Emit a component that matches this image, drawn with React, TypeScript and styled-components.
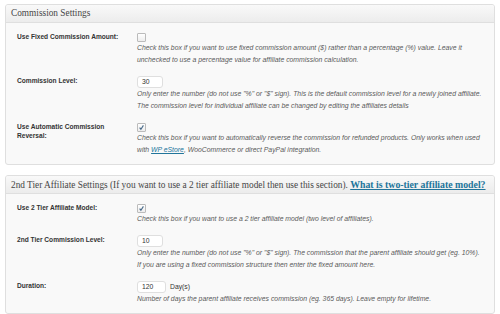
import React from "react";
import styled, { createGlobalStyle } from "styled-components";

const GlobalStyle = createGlobalStyle`
  html, body {
    margin: 0;
    padding: 0;
    background: #ffffff;
  }
  body {
    font-family: "Liberation Sans", Arial, sans-serif;
  }
`;

const Page = styled.div`
  width: 500px;
  height: 314px;
  padding: 4px 5px 0;
  box-sizing: border-box;
  display: flex;
  flex-direction: column;
  gap: 10px;
  overflow: hidden;
`;

const Panel = styled.section`
  border: 1px solid #dfdfdf;
  border-radius: 3px;
  background: #f9f9f9;
  overflow: hidden;
`;

const PanelHeader = styled.h3`
  margin: 0;
  height: 17px;
  line-height: 17px;
  padding: 0 0 0 5px;
  border-bottom: 1px solid #dfdfdf;
  background: linear-gradient(to bottom, #f9f9f9, #ececec);
  font-family: "Liberation Serif", "Times New Roman", serif;
  font-weight: normal;
  font-size: 9.3px;
  color: #464646;
  white-space: nowrap;
`;

const HeaderLink = styled.a`
  font-weight: bold;
  font-size: 9.8px;
  color: #21759b;
  text-decoration: underline;
`;

const PanelBody = styled.div`
  padding: 4px 0 6px;
`;

const Row = styled.div`
  display: grid;
  grid-template-columns: 112px 1fr;
  column-gap: 8px;
  padding: 5px 0 5px 11px;
`;

const Label = styled.div`
  font-weight: bold;
  font-size: 6.6px;
  line-height: 9px;
  color: #333333;
`;

const Field = styled.div`
  display: flex;
  flex-direction: column;
  align-items: flex-start;
`;

const Inline = styled.div`
  display: flex;
  align-items: center;
  gap: 4px;
  font-size: 6.8px;
  color: #333333;
`;

const Box = styled.span`
  display: block;
  width: 7px;
  height: 7px;
  margin-top: 1px;
  border: 1px solid #bbbbbb;
  border-radius: 1px;
  background: linear-gradient(to bottom, #ffffff, #ededed);
  position: relative;
`;

const Input = styled.div<{ $w: number }>`
  width: ${(p) => p.$w}px;
  height: 12px;
  box-sizing: border-box;
  border: 1px solid #dfdfdf;
  border-radius: 3px;
  background: #ffffff;
  font-size: 6.8px;
  line-height: 10px;
  padding-left: 4px;
  color: #333333;
`;

const Desc = styled.p`
  margin: 0;
  font-style: italic;
  font-size: 6.85px;
  line-height: 12px;
  color: #5a5a5a;
  white-space: nowrap;
`;

const DescLink = styled.a`
  color: #21759b;
  text-decoration: underline;
`;

function Checkbox({ checked }: { checked?: boolean }) {
  return (
    <Box>
      {checked && (
        <svg width="7" height="7" viewBox="0 0 7 7" style={{ position: "absolute", left: 0, top: 0 }}>
          <path d="M1.6 3.6 L2.9 5.2 L5.4 1.4" fill="none" stroke="#4a6b8a" strokeWidth="1.1" />
        </svg>
      )}
    </Box>
  );
}

export default function App() {
  return (
    <>
      <GlobalStyle />
      <Page>
        <Panel>
          <PanelHeader>Commission Settings</PanelHeader>
          <PanelBody>
            <Row>
              <Label>Use Fixed Commission Amount:</Label>
              <Field>
                <Checkbox />
                <Desc>
                  Check this box if you want to use fixed commission amount ($) rather than a percentage (%) value. Leave it
                  <br />
                  unchecked to use a percentage value for affiliate commission calculation.
                </Desc>
              </Field>
            </Row>
            <Row>
              <Label>Commission Level:</Label>
              <Field>
                <Input $w={26}>30</Input>
                <Desc>
                  Only enter the number (do not use "%" or "$" sign). This is the default commission level for a newly joined affiliate.
                  <br />
                  The commission level for individual affiliate can be changed by editing the affiliates details
                </Desc>
              </Field>
            </Row>
            <Row>
              <Label>
                Use Automatic Commission
                <br />
                Reversal:
              </Label>
              <Field>
                <Checkbox checked />
                <Desc>
                  Check this box if you want to automatically reverse the commission for refunded products. Only works when used
                  <br />
                  with <DescLink href="#">WP eStore</DescLink>, WooCommerce or direct PayPal integration.
                </Desc>
              </Field>
            </Row>
          </PanelBody>
        </Panel>

        <Panel>
          <PanelHeader>
            2nd Tier Affiliate Settings (If you want to use a 2 tier affiliate model then use this section).{" "}
            <HeaderLink href="#">What is two-tier affiliate model?</HeaderLink>
          </PanelHeader>
          <PanelBody>
            <Row>
              <Label>Use 2 Tier Affiliate Model:</Label>
              <Field>
                <Checkbox checked />
                <Desc>Check this box if you want to use a 2 tier affiliate model (two level of affiliates).</Desc>
              </Field>
            </Row>
            <Row>
              <Label>2nd Tier Commission Level:</Label>
              <Field>
                <Input $w={26}>10</Input>
                <Desc>
                  Only enter the number (do not use "%" or "$" sign). The commission that the parent affiliate should get (eg. 10%).
                  <br />
                  If you are using a fixed commission structure then enter the fixed amount here.
                </Desc>
              </Field>
            </Row>
            <Row>
              <Label>Duration:</Label>
              <Field>
                <Inline>
                  <Input $w={29}>120</Input>
                  Day(s)
                </Inline>
                <Desc>Number of days the parent affiliate receives commission (eg. 365 days). Leave empty for lifetime.</Desc>
              </Field>
            </Row>
          </PanelBody>
        </Panel>
      </Page>
    </>
  );
}
